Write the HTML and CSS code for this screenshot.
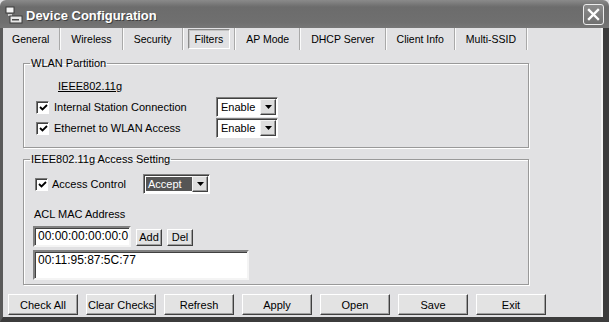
FILE: index.html
```html
<!DOCTYPE html>
<html lang="en">
<head>
    <meta charset="UTF-8">
    <title>Device Configuration</title>
    <link rel="stylesheet" href="styles.css">
</head>
<body>

<div class="window">
    <div class="titlebar">
        <svg class="app-icon" viewBox="0 0 18 18" width="18" height="18">
            <rect x="1" y="1" width="8" height="6" fill="#f4f4f4" stroke="#3a3a3a" stroke-width="1"/>
            <rect x="3" y="8" width="4" height="2" fill="#d0d0d0"/>
            <rect x="5" y="10" width="12" height="7" fill="#e8e8e8" stroke="#3a3a3a" stroke-width="1"/>
            <rect x="7" y="13" width="7" height="1.5" fill="#4a4a4a"/>
        </svg>
        <span class="title">Device Configuration</span>
        <span class="close">
            <svg viewBox="0 0 19 19" width="19" height="19">
                <path d="M5 5 L14 14 M14 5 L5 14" stroke="#fff" stroke-width="2.4" stroke-linecap="square"/>
            </svg>
        </span>
    </div>

    <div class="frame">
        <div class="tabs">
            <span class="tab">General</span>
            <span class="tab">Wireless</span>
            <span class="tab">Security</span>
            <span class="tab active"><span>Filters</span></span>
            <span class="tab">AP Mode</span>
            <span class="tab">DHCP Server</span>
            <span class="tab">Client Info</span>
            <span class="tab">Multi-SSID</span>
        </div>

        <div class="panel">
            <fieldset class="group partition">
                <legend>WLAN Partition</legend>
                <div class="band">IEEE802.11g</div>
                <div class="opt-row">
                    <label class="opt"><span class="check"><svg viewBox="0 0 9 9" width="9" height="9"><path d="M1 4 L3.5 6.5 L8 2" fill="none" stroke="#000" stroke-width="1.8"/></svg></span>Internal Station Connection</label>
                    <div class="select"><span class="value">Enable</span><span class="arrow"><svg viewBox="0 0 7 4" width="7" height="4"><path d="M0 0 H7 L3.5 4 Z" fill="#000"/></svg></span></div>
                </div>
                <div class="opt-row">
                    <label class="opt"><span class="check"><svg viewBox="0 0 9 9" width="9" height="9"><path d="M1 4 L3.5 6.5 L8 2" fill="none" stroke="#000" stroke-width="1.8"/></svg></span>Ethernet to WLAN Access</label>
                    <div class="select"><span class="value">Enable</span><span class="arrow"><svg viewBox="0 0 7 4" width="7" height="4"><path d="M0 0 H7 L3.5 4 Z" fill="#000"/></svg></span></div>
                </div>
            </fieldset>

            <fieldset class="group access">
                <legend>IEEE802.11g Access Setting</legend>
                <div class="opt-row">
                    <label class="opt"><span class="check"><svg viewBox="0 0 9 9" width="9" height="9"><path d="M1 4 L3.5 6.5 L8 2" fill="none" stroke="#000" stroke-width="1.8"/></svg></span>Access Control</label>
                    <div class="select wide"><span class="value hl">Accept</span><span class="arrow"><svg viewBox="0 0 7 4" width="7" height="4"><path d="M0 0 H7 L3.5 4 Z" fill="#000"/></svg></span></div>
                </div>
                <div class="acl-label">ACL MAC Address</div>
                <div class="mac-row">
                    <span class="field">00:00:00:00:00:0</span>
                    <span class="small-btn">Add</span>
                    <span class="small-btn">Del</span>
                </div>
                <div class="list">00:11:95:87:5C:77</div>
            </fieldset>
        </div>

        <div class="buttons">
            <span class="btn">Check All</span>
            <span class="btn">Clear Checks</span>
            <span class="btn">Refresh</span>
            <span class="btn">Apply</span>
            <span class="btn">Open</span>
            <span class="btn">Save</span>
            <span class="btn">Exit</span>
        </div>
    </div>
</div>

</body>
</html>
```

FILE: styles.css
```css
body {
    margin: 0;
    font-family: "Liberation Sans", Arial, sans-serif;
    font-size: 11px;
    color: #000;
    background: #3c3c3c;
}

.window {
    width: 609px;
    height: 322px;
    display: flex;
    flex-direction: column;
    background: #e1e1e3;
    overflow: hidden;
}

/* title bar */
.titlebar {
    height: 28px;
    flex: none;
    display: flex;
    align-items: center;
    padding: 2px 5px 0 5px;
    box-sizing: border-box;
    background: linear-gradient(#8a8a8a, #6c6c6c 25%, #6f6f6f 80%, #777);
    border-radius: 6px 6px 0 0;
}

.app-icon {
    margin-right: 3px;
}

.title {
    color: #fff;
    font-weight: bold;
    font-size: 13px;
    text-shadow: 1px 1px #3e3e3e;
}

.close {
    margin-left: auto;
    margin-top: -1px;
    width: 19px;
    height: 19px;
    border: 1px solid #ececec;
    border-radius: 3px;
    background: linear-gradient(#8c8c8c, #707070);
    display: flex;
}

/* frame */
.frame {
    flex: 1;
    display: flex;
    flex-direction: column;
    border-left: 3px solid #5a5a5a;
    border-right: 6px solid #3c3c3c;
    border-bottom: 5px solid #3c3c3c;
    box-shadow: inset -2px 0 #f2f2f2;
}

.tabs {
    display: flex;
    height: 22px;
    font-size: 10.5px;
}

.tab {
    padding: 0 10px;
    line-height: 22px;
    border-right: 1px solid #a9a9a9;
    box-shadow: 1px 0 #fbfbfb;
    margin-right: 1px;
}

.tab:first-child {
    padding-left: 9px;
}

.tab.active {
    padding: 1px 4px;
    display: flex;
}

.tab.active span {
    padding: 0 6px;
    line-height: 18px;
    border: 1px solid;
    border-color: #8a8a8a #fff #fff #8a8a8a;
    box-shadow: inset 1px 1px #c4c4c4;
}

/* group boxes */
.panel {
    padding: 7px 0 0 20px;
}

.group {
    width: 506px;
    box-sizing: border-box;
    margin: 0;
    padding: 0 0 0 6px;
    border: 1px solid #999;
    box-shadow: inset 1px 1px #fff, 1px 1px #fff;
    min-width: 0;
}

.group legend {
    padding: 0 1px;
    line-height: 13px;
}

.partition {
    padding-bottom: 8px;
}

.access {
    margin-top: 5px;
    padding-bottom: 4px;
}

.band {
    margin: 10px 0 4px 28px;
    line-height: 13px;
    text-decoration: underline;
}

.opt-row {
    display: flex;
    align-items: center;
    height: 20px;
    margin-bottom: 1px;
}

.access .opt-row {
    margin-top: 8px;
}

.opt {
    display: flex;
    align-items: center;
    gap: 5px;
    width: 186px;
}

.access .opt {
    width: 113px;
    gap: 4px;
}

.check {
    width: 13px;
    height: 13px;
    box-sizing: border-box;
    margin-left: 6px;
    background: #fff;
    border: 1px solid;
    border-color: #7a7a7a #fff #fff #7a7a7a;
    box-shadow: inset 1px 1px #404040;
    display: flex;
    align-items: center;
    justify-content: center;
    padding: 1px 0 0 1px;
}

.access .check {
    margin-left: 5px;
}

.select {
    width: 62px;
    height: 20px;
    box-sizing: border-box;
    display: flex;
    padding: 1px;
    background: #fff;
    border: 1px solid;
    border-color: #808080 #fff #fff #808080;
    box-shadow: inset 1px 1px #404040;
}

.select.wide {
    width: 67px;
}

.select .value {
    flex: 1;
    padding-left: 2px;
    line-height: 16px;
    margin-left: 1px;
}

.select .value.hl {
    background: #555;
    color: #fff;
    margin: 1px 0 0 1px;
    line-height: 14px;
    height: 14px;
}

.select .arrow {
    width: 16px;
    box-sizing: border-box;
    background: #dedede;
    border: 1px solid;
    border-color: #f4f4f4 #404040 #404040 #f4f4f4;
    box-shadow: inset -1px -1px #9a9a9a;
    display: flex;
    align-items: center;
    justify-content: center;
}

.acl-label {
    margin: 14px 0 0 4px;
    line-height: 13px;
}

.mac-row {
    display: flex;
    align-items: center;
    margin: 5px 0 0 3px;
}

.field {
    width: 98px;
    height: 21px;
    box-sizing: border-box;
    padding-left: 3px;
    line-height: 17px;
    font-size: 12px;
    white-space: nowrap;
    overflow: hidden;
    background: #fff;
    border: 2px solid;
    border-color: #808080 #f4f4f4 #f4f4f4 #808080;
    box-shadow: inset 1px 1px #404040;
}

.small-btn {
    width: 26px;
    height: 17px;
    box-sizing: border-box;
    margin-left: 5px;
    margin-top: 1px;
    display: flex;
    align-items: center;
    justify-content: center;
    background: #e2e2e2;
    border: 1px solid;
    border-color: #fff #404040 #404040 #fff;
    box-shadow: inset -1px -1px #a0a0a0;
}

.list {
    width: 216px;
    height: 30px;
    box-sizing: border-box;
    margin: 3px 0 0 3px;
    padding: 1px 3px;
    font-size: 12px;
    line-height: 14px;
    background: #fff;
    border: 2px solid;
    border-color: #808080 #f4f4f4 #f4f4f4 #808080;
    box-shadow: inset 1px 1px #404040;
}

/* bottom buttons */
.buttons {
    display: flex;
    gap: 8px;
    margin-top: 9px;
    padding-left: 5px;
}

.btn {
    width: 70px;
    height: 21px;
    box-sizing: border-box;
    display: flex;
    align-items: center;
    justify-content: center;
    background: #e3e3e3;
    border: 1px solid;
    border-color: #fff #404040 #404040 #fff;
    box-shadow: inset -1px -1px #a0a0a0;
}
```
